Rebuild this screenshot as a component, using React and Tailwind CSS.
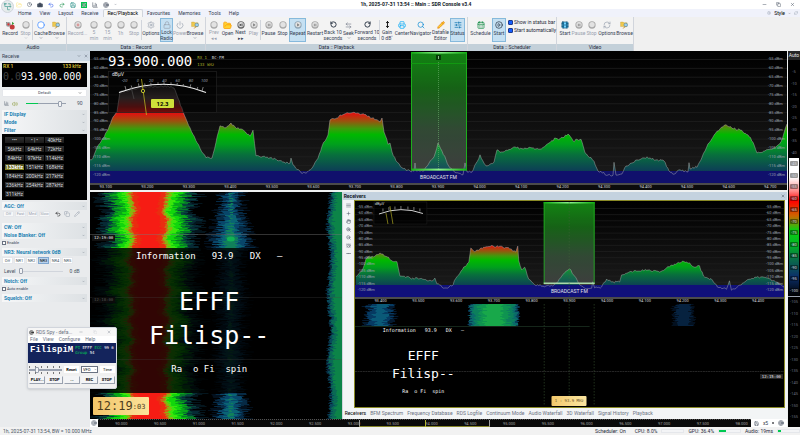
import { useState } from 'react';
import clsx from 'clsx';
import {
  AlarmClock, AlignJustify, ArrowLeftRight, BarChart3, CalendarDays, Camera, ChevronDown, Circle, CirclePlay, Clock,
  Copy, Film, FolderOpen, Hand, Lock, Minus, MoreHorizontal, MoveVertical, Pencil, Plus, Power, Printer, Redo2,
  RefreshCw, RotateCcw, RotateCw, Save, Search, Settings, SlidersHorizontal, Target, Undo2, Volume2, X, ZoomIn,
  ZoomOut,
} from 'lucide-react';

// repeatable noise, so the traces look the same on every render
const makeNoise = (seed) => {
  let s = seed;
  return () => {
    s = (s * 16807) % 2147483647;
    return s / 2147483647 - 0.5;
  };
};

const traceFrom = (points, seed) => {
  const noise = makeNoise(seed);
  const out = [];
  for (let i = 0; i < points.length - 1; i += 1) {
    const [x0, y0] = points[i];
    const [x1, y1] = points[i + 1];
    const steps = Math.max(1, Math.round((x1 - x0) / 1.4));
    for (let k = 0; k < steps; k += 1) {
      const t = k / steps;
      const amp = k === 0 ? 0.6 : 2;
      out.push(`${(x0 + (x1 - x0) * t).toFixed(1)},${(y0 + (y1 - y0) * t + noise() * amp).toFixed(1)}`);
    }
  }
  out.push(points[points.length - 1].join(','));
  return out.join(' ');
};

// one ragged column of the waterfall, a row per pixel
const raggedPath = (top, bottom, center, half, rough, seed) => {
  const noise = makeNoise(seed);
  let d = '';
  for (let y = top; y < bottom; y += 1) {
    const w = Math.max(0, half(y));
    const l = center - w - noise() * rough;
    const r = center + w + noise() * rough;
    if (r > l) d += `M${l.toFixed(1)} ${y}H${r.toFixed(1)}V${y + 1}H${l.toFixed(1)}Z`;
  }
  return d;
};

const MAIN_POINTS = [
  [90, 160], [93, 158], [96, 150], [103, 138], [108, 130], [113, 117], [117, 112], [119, 98], [120, 92], [135, 89],
  [150, 87], [165, 86], [174, 88], [178, 98], [183, 112], [190, 128], [200, 148], [206, 158], [212, 158], [216, 142],
  [220, 126], [226, 128], [231, 123], [235, 127], [244, 131], [250, 136], [253, 130], [256, 156], [270, 158],
  [284, 162], [290, 163], [291, 158], [293, 165], [301, 173], [306, 173], [312, 168], [318, 158], [322, 146],
  [328, 135], [330, 120], [335, 119], [340, 115], [350, 113], [358, 113], [366, 115], [372, 118], [380, 122],
  [382, 118], [384, 132], [388, 144], [390, 143], [392, 152], [396, 161], [402, 168], [410, 171], [414, 171],
  [415, 163], [416, 171], [424, 171], [430, 161], [434, 157], [438, 143], [442, 151], [446, 160], [450, 168],
  [456, 173], [463, 175], [465, 163], [467, 172], [472, 172], [480, 155], [484, 163], [486, 166], [494, 162],
  [497, 150], [500, 152], [506, 150], [515, 147], [522, 149], [532, 148], [540, 149], [546, 145], [556, 138],
  [560, 139], [568, 134], [573, 141], [581, 139], [585, 153], [594, 161], [598, 171], [608, 175], [613, 175],
  [614, 162], [616, 175], [622, 174], [626, 166], [637, 160], [647, 157], [656, 160], [664, 161], [669, 171],
  [674, 174], [680, 170], [688, 172], [689, 163], [690, 169], [697, 167], [702, 157], [708, 144], [714, 135],
  [720, 129], [726, 125], [732, 128], [740, 130], [748, 135], [753, 142], [757, 153], [765, 151], [775, 148],
  [781, 142], [787, 124],
];

const RX_POINTS = [
  [356, 278], [362, 272], [366, 260], [368, 258], [375, 257], [380, 254], [386, 257], [391, 261], [397, 263],
  [400, 277], [410, 279], [420, 280], [433, 282], [435, 279], [437, 285], [445, 289], [452, 287], [457, 278],
  [464, 268], [469, 263], [471, 249], [475, 253], [480, 250], [485, 248], [493, 247], [503, 248], [510, 250],
  [516, 253], [518, 247], [519, 262], [522, 271], [525, 268], [529, 280], [535, 286], [546, 287], [553, 287],
  [557, 284], [562, 277], [568, 271], [570, 270], [575, 277], [580, 286], [585, 289], [592, 289], [593, 283],
  [595, 289], [602, 288], [607, 280], [612, 283], [620, 283], [622, 276], [630, 273], [640, 272], [650, 271],
  [660, 273], [667, 269], [675, 265], [683, 262], [690, 264], [694, 268], [700, 267], [704, 277], [713, 281],
  [718, 288], [727, 290], [730, 282], [732, 291], [738, 288], [743, 284], [748, 281], [757, 278], [767, 279],
  [775, 282], [785, 288],
];

const MAIN_TRACE = traceFrom(MAIN_POINTS, 4211);
const RX_TRACE = traceFrom(RX_POINTS, 977);

const wobble = (y) =>
  3 * Math.sin(y / 5) + 2.5 * Math.sin(y / 2.3 + 1) - 6 * Math.exp(-((y - 234) ** 2) / 12) - 5 * Math.exp(-((y - 203) ** 2) / 16);

const STRONG_LAYERS = [
  [50, 16, '#04151d'], [45, 15, '#062a35'], [41, 13, '#06453a'], [38, 11, '#067a28'], [34, 10, '#08a818'],
  [30, 8, '#12d60c'], [25, 6, '#3be60c'], [21, 4, '#86b810'], [18, 4, '#c86a14'], [16, 3, '#ea2d10'], [11, 3, '#f61c14'],
].map(([w, rough, fill], i) => ({
  fill,
  d: raggedPath(192, 419, 149, (y) => w + wobble(y) * (w > 24 ? 1 : 0.6), rough, 31 + i * 77),
}));

const weakWidth = (w) => (y) => {
  if (y < 208) return w - 6 - (y % 5);
  if (y < 250) return w - 7 + (y - 208) / 4;
  return w - 5 + 2 * Math.sin(y / 9);
};
const WEAK_LAYERS = [
  [20, 13, '#03101d'], [16, 12, '#062a45'], [12, 10, '#08466a'], [8, 8, '#0a6474'], [4, 6, '#10805a'],
].map(([w, rough, fill], i) => ({ fill, d: raggedPath(192, 419, 231, weakWidth(w), rough, 501 + i * 91) }));

const EDGE_LAYERS = [
  [13, 4, '#062438'], [12, 4, '#08485a'], [10, 4, '#0a6a54'], [7, 4, '#0c8448'],
].map(([w, rough, fill], i) => ({ fill, d: raggedPath(192, 419, 342, (y) => w + 1.5 * Math.sin(y / 11), rough, 83 + i * 53) }));

const RX_BLOBS = [
  ...[[15, 8, '#041a30'], [11, 8, '#063a62'], [6, 7, '#0a5a78']].map(([w, r, fill], i) => ({
    fill, d: raggedPath(305, 327, 380, (y) => w + Math.sin(y / 2), r, 11 + i * 17),
  })),
  ...[[25, 3, '#083c58'], [23, 4, '#0a6a6a'], [20, 4, '#0c7f5c'], [15, 6, '#0f9450'], [9, 6, '#18a84a']].map(([w, r, fill], i) => ({
    fill, d: raggedPath(305, 327, 494, () => w, r, 611 + i * 29),
  })),
  ...[[10, 6, '#03101f'], [7, 5, '#06223f']].map(([w, r, fill], i) => ({
    fill, d: raggedPath(305, 327, 684, () => w, r, 711 + i * 31),
  })),
];

/* ---------- ribbon ---------- */

const Disc = ({ color = '#a8a8a8', kind }) => (
  <svg viewBox="0 0 9 9" className="size-[8px]">
    <circle cx="4.5" cy="4.5" r="4.1" fill={color} />
    <circle cx="4.5" cy="4" r="3" fill="#e2e2e2" />
    {kind === 'rec' && <circle cx="4.5" cy="4.5" r="1.6" fill="#d99a9a" />}
    {kind === 'play' && <path d="M3.6 2.6 6.2 4.4 3.6 6.2Z" fill="#777" />}
    {kind === 'pause' && <path d="M3.2 3h1v3h-1zM5 3h1v3H5z" fill="#888" />}
    {kind === 'next' && <path d="M3 2.8 5 4.4 3 6ZM5.2 2.8h.9v3.2h-.9z" fill="#333" />}
  </svg>
);

const RecordIcon = () => (
  <svg viewBox="0 0 10 9" className="h-[9px] w-[10px]">
    <path d="M1 1.5 5 4" stroke="#555" strokeWidth="1" />
    <circle cx="3.4" cy="3.4" r="2.4" fill="#9a9a9a" />
    <circle cx="3.4" cy="3.4" r="1.1" fill="#d33" />
    <circle cx="7.2" cy="6" r="2.5" fill="#c33a3a" />
    <path d="M7 .8 9.2 2.6 7 4Z" fill="#3a9a3a" />
  </svg>
);

const BrowseIcon = () => (
  <svg viewBox="0 0 10 9" className="h-[8px] w-[9px]">
    <path d="M.6 1.2h3l.7.9h3.6v4.2H.6Z" fill="#efc94f" stroke="#c29a2c" strokeWidth=".4" />
    <circle cx="6.4" cy="4.4" r="2" fill="#9fd0ee" stroke="#3f7fb0" strokeWidth=".6" />
    <path d="M6 5.8 3.6 8.4" stroke="#c08a20" strokeWidth="1.1" />
  </svg>
);

const line = 'size-[7px] text-gray-800';
const faint = 'size-[8px] text-gray-400';

const RIBBON = [
  {
    title: 'Audio', width: 'w-[67px]',
    items: [
      { label: 'Record', width: 'w-[18px]', icon: <RecordIcon /> },
      { label: 'Stop', width: 'w-[13px]', icon: <Disc />, off: true, menu: true },
      { sep: true },
      { label: 'Cache', width: 'w-[16px]', icon: <Clock className="size-[8px] fill-white text-blue-500" />, menu: true },
      { label: 'Browse', width: 'w-[15px]', icon: <BrowseIcon />, menu: true },
    ],
  },
  {
    title: 'Data :: Record', width: 'w-[139px]',
    items: [
      { label: 'Record...', width: 'w-[19px]', icon: <Disc kind="rec" />, off: true },
      { label: '5', sub: 'min', width: 'w-[14px]', icon: <Disc />, off: true },
      { label: '15', sub: 'min', width: 'w-[13px]', icon: <Disc />, off: true },
      { label: '1h', width: 'w-[13px]', icon: <Disc />, off: true },
      { label: 'Stop', width: 'w-[14px]', icon: <Disc />, off: true },
      { sep: true },
      { label: 'Options', width: 'w-[18px]', icon: <Settings className={faint} /> },
      { label: 'Lock', sub: 'Radio', width: 'w-[13px]', icon: <Lock className={faint} />, active: true },
      { label: 'Power', width: 'w-[14px]', icon: <Power className={faint} />, off: true },
      { label: 'Browse', width: 'w-[16px]', icon: <BrowseIcon />, menu: true },
    ],
  },
  {
    title: 'Data :: Playback', width: 'w-[262px]',
    items: [
      { label: 'Prev', sub: '◂◂', width: 'w-[14px]', icon: <Disc />, off: true },
      { label: 'Open', width: 'w-[13px]', icon: <FolderOpen className="size-[9px] fill-amber-300 text-amber-500" /> },
      { label: 'Next', sub: '▸▸', width: 'w-[13px]', icon: <Disc kind="next" color="#666" /> },
      { label: 'Play', width: 'w-[13px]', icon: <Disc kind="play" />, off: true },
      { sep: true },
      { label: 'Pause', width: 'w-[15px]', icon: <Disc kind="pause" /> },
      { label: 'Stop', width: 'w-[13px]', icon: <Disc /> },
      { label: 'Repeat', width: 'w-[17px]', icon: <Disc kind="play" color="#8fa5b5" />, active: true },
      { label: 'Restart', width: 'w-[18px]', icon: <Disc kind="pause" /> },
      { label: 'Back 10', sub: 'seconds', width: 'w-[18px]', icon: <RotateCcw className={line} strokeWidth={3} /> },
      { label: 'Seek', width: 'w-[13px]', icon: <ArrowLeftRight className="size-[7px] text-gray-500" />, menu: true },
      { label: 'Forward 10', sub: 'seconds', width: 'w-[24px]', icon: <RotateCw className={line} strokeWidth={3} /> },
      { sep: true },
      { label: 'Gain', sub: '0 dB˅', width: 'w-[14px]', icon: <MoveVertical className="size-[7px] text-black" strokeWidth={3} /> },
      { label: 'Center', width: 'w-[16px]', icon: <Printer className="size-[8px] text-sky-500" /> },
      { label: 'Navigator', width: 'w-[21px]', icon: <Search className="size-[8px] text-sky-600" /> },
      { label: 'Datafile', sub: 'Editor', width: 'w-[19px]', icon: <Pencil className="size-[8px] fill-amber-300 text-amber-600" /> },
      { label: 'Status', width: 'w-[15px]', icon: <SlidersHorizontal className="size-[8px] text-sky-700" />, active: true },
    ],
  },
  {
    title: 'Data :: Scheduler', width: 'w-[89px]',
    items: [
      { label: 'Schedule', width: 'w-[23px]', icon: <CalendarDays className="size-[8px] text-green-700" /> },
      { label: 'Start', width: 'w-[14px]', icon: <CirclePlay className="size-[8px] text-gray-800" />, active: true },
      { checks: true },
    ],
  },
  {
    title: 'Video', width: 'w-[77px]',
    items: [
      { label: 'Start', width: 'w-[14px]', icon: <Film className="size-[8px] fill-sky-300 text-sky-900" /> },
      { label: 'Pause', width: 'w-[13px]', icon: <Disc kind="pause" />, off: true },
      { label: 'Stop', width: 'w-[13px]', icon: <Disc />, off: true },
      { label: 'Options', width: 'w-[18px]', icon: <RefreshCw className={faint} /> },
      { label: 'Browse', width: 'w-[17px]', icon: <BrowseIcon /> },
    ],
  },
];

const RibbonButton = ({ item }) => (
  <button
    type="button"
    className={clsx(
      'flex h-[24px] shrink-0 flex-col items-center border pt-px leading-[6px] whitespace-nowrap',
      item.width,
      item.active ? 'border-[#86b9dc] bg-[#c5e0f2]' : 'border-transparent',
      item.off ? 'text-gray-400' : 'text-gray-700',
    )}
  >
    <span className="flex h-[10px] items-center">{item.icon}</span>
    <span>{item.label}</span>
    {item.sub && <span>{item.sub}</span>}
    {item.menu && <ChevronDown className="size-[4px]" />}
  </button>
);

const StatusChecks = () => (
  <div className="ml-[2px] flex flex-col gap-[3px] pt-[2px] text-gray-800">
    <label className="flex items-center gap-px whitespace-nowrap">
      <input type="checkbox" defaultChecked className="size-[5px] appearance-none rounded-[1px] border border-blue-900 bg-blue-600" />
      Show in status bar
    </label>
    <label className="flex items-center gap-px whitespace-nowrap">
      <input type="checkbox" defaultChecked className="size-[5px] appearance-none rounded-[1px] border border-blue-900 bg-blue-600" />
      Start automatically
    </label>
  </div>
);

const Ribbon = () => (
  <div className="flex h-[34px] shrink-0 bg-[#f0f0f0]">
    {RIBBON.map((group) => (
      <section key={group.title} className={clsx('flex shrink-0 flex-col border-r border-gray-300 bg-[#f3f3f3]', group.width)}>
        <div className="flex flex-1 items-start pt-px pl-px">
          {group.items.map((item, i) => {
            if (item.sep) return <span key={i} className="mt-[2px] h-[20px] w-px shrink-0 bg-gray-300" />;
            if (item.checks) return <StatusChecks key={i} />;
            return <RibbonButton key={i} item={item} />;
          })}
        </div>
        <h2 className="h-[7px] bg-[#c3d0d9] text-center leading-[7px] text-gray-800">{group.title}</h2>
      </section>
    ))}
  </div>
);

const TABS = ['Home', 'View', 'Layout', 'Receive', 'Rec/Playback', 'Favourites', 'Memories', 'Tools', 'Help'];

const TitleBar = () => (
  <header className="relative shrink-0">
    <div className="grid h-[9px] grid-cols-[1fr_auto_1fr] items-center bg-white">
      <div className="flex items-center gap-[5px] pl-[16px] text-gray-700">
        <FolderOpen className="size-[6px] text-amber-200" />
        <Clock className="size-[5px]" />
        <Camera className="size-[6px] fill-gray-600" />
        <Undo2 className="size-[6px] text-blue-700" />
        <Redo2 className="size-[6px] text-green-700" />
        <Save className="size-[6px] text-teal-700" />
        <span className="border border-green-500 bg-green-100"><Film className="size-[4px] text-green-800" /></span>
        <BarChart3 className="size-[6px]" />
        <Target className="size-[6px]" />
        <ChevronDown className="size-[3px]" />
      </div>
      <h1 className="pl-[32px] font-bold text-gray-900">1h, 2025-07-31 13:54 :: Main :: SDR Console v3.4</h1>
      <div className="flex justify-end gap-[9px] pr-[5px] text-gray-700">
        <button type="button" aria-label="Minimize"><Minus className="size-[5px]" /></button>
        <button type="button" aria-label="Restore"><Copy className="size-[5px]" /></button>
        <button type="button" aria-label="Close"><X className="size-[5px]" /></button>
      </div>
    </div>
    <nav className="flex h-[8px] items-center bg-[#f0f2fb] pl-[14px] text-gray-700">
      {TABS.map((tab) => (
        <button
          key={tab}
          type="button"
          className={clsx('h-full px-[4px]', tab === 'Rec/Playback' && 'rounded-t-[2px] border border-b-0 border-gray-300 bg-[#f7f7f7] text-black')}
        >
          {tab}
        </button>
      ))}
      <div className="ml-auto flex items-center gap-[3px] pr-[2px]">
        <Settings className="size-[4px] text-gray-400" />
        <span className="text-black">Style</span>
        <ChevronDown className="size-[3px]" />
        <RefreshCw className="size-[4px] text-gray-400" />
      </div>
    </nav>
    <div className="absolute top-0 left-[1px] flex size-[13px] items-center justify-center rounded-full border border-gray-300 bg-[#e6ecec]">
      <svg viewBox="0 0 10 10" className="size-[9px]" fill="none" stroke="#5fa8a0" strokeWidth=".9">
        <path d="M2 2h2.4M5.5 2H8M2 2v3h3v3.6M5 5h3M8 2v1.6M5 8.6h2.6" />
        <circle cx="2" cy="2" r=".7" fill="#5fa8a0" />
        <circle cx="8" cy="5" r=".7" fill="#5fa8a0" />
      </svg>
    </div>
  </header>
);

/* ---------- left column ---------- */

const Section = ({ title }) => (
  <h3 className="flex h-[8px] items-center justify-between bg-gradient-to-r from-[#f6f7f8] to-[#dde1e4] pr-[2px] pl-[2px] font-bold text-[#1f83b4]">
    {title}
    <ChevronDown className="size-[3px] text-gray-600" />
  </h3>
);

const FILTERS = [
  '•••', '• | •', '40kHz', '56kHz', '64kHz', '72kHz', '84kHz', '97kHz', '114kHz', '133kHz', '151kHz', '168kHz',
  '184kHz', '200kHz', '217kHz', '236kHz', '254kHz', '287kHz', '311kHz',
];

const thumb =
  '[&::-webkit-slider-thumb]:h-[6px] [&::-webkit-slider-thumb]:w-[4px] [&::-webkit-slider-thumb]:appearance-none [&::-webkit-slider-thumb]:rounded-[1px] [&::-webkit-slider-thumb]:border [&::-webkit-slider-thumb]:border-gray-400 [&::-webkit-slider-thumb]:bg-gray-100';

const ReceivePanel = () => {
  const [filter, setFilter] = useState('133kHz');
  const [nr, setNr] = useState('NR3');

  return (
    <aside className="flex w-[90px] shrink-0 flex-col bg-[#e9ebed]">
      <div className="flex h-[10px] items-center gap-[3px] bg-[#ccd7e2] pr-[2px] pl-[2px] text-gray-700">
        <span>Receive</span>
        <ChevronDown className="ml-auto size-[4px]" />
        <X className="size-[4px]" />
      </div>
      <div className="mt-[2px] mr-[3px] ml-[2px] h-[24px] bg-black px-px">
        <div className="flex h-[7px] items-center justify-between pr-[5px] font-bold text-[#c9b32f]">
          <span>RX 1</span>
          <span>133 kHz</span>
        </div>
        <p className="font-['DejaVu_Sans_Mono',monospace] text-[10px] leading-[14px] text-white">
          <span className="text-neutral-700">0.0</span>93.900.000
        </p>
      </div>

      <div className="flex flex-col pr-[3px] pl-[2px]">
        <div className="relative mt-[2px] h-[8px] rounded-[1px] border border-gray-200 bg-white">
          <select aria-label="Profile" className="block h-full w-full appearance-none bg-transparent text-center text-[4px] leading-[6px] text-gray-700">
            <option>Default</option>
          </select>
          <ChevronDown className="pointer-events-none absolute top-px right-[4px] size-[4px]" />
        </div>
        <div className="flex h-[13px] items-center gap-[3px] pl-[2px] text-gray-600">
          <BarChart3 className="size-[5px]" />
          <Volume2 className="size-[6px] text-[#8a9a3a]" />
          <input
            type="range"
            aria-label="Volume"
            defaultValue="90"
            className={clsx('ml-[5px] h-px w-[40px] appearance-none bg-gradient-to-r from-green-500 from-30% to-gray-400 to-30%', thumb)}
          />
          <span className="ml-[8px]">90</span>
        </div>
        <Section title="IF Display" />
        <Section title="Mode" />
        <Section title="Filter" />
      </div>

      <div className="mr-[3px] ml-[2px] grid h-[66px] grid-cols-[repeat(3,19px)] content-start gap-px bg-black pt-[2px] pl-[3px]">
        {FILTERS.map((f) => (
          <button
            key={f}
            type="button"
            onClick={() => setFilter(f)}
            className={clsx(
              'h-[8px] border-y border-black bg-gradient-to-b leading-[6px]',
              f === filter ? 'from-[#4a4a20] to-[#8a8a1c] font-bold text-white' : 'from-[#303030] to-[#1a1a1a] text-gray-300',
            )}
          >
            {f}
          </button>
        ))}
      </div>

      <div className="flex flex-col pr-[3px] pl-[2px]">
        <div className="h-[2px]" />
        <Section title="AGC: Off" />
        <div className="flex h-[8px] items-center gap-px pl-px text-[4px] text-gray-400">
          {['Off', 'Fast', 'Med', 'Slow'].map((m) => (
            <button key={m} type="button" className="h-[6px] w-[11px] border border-gray-200 bg-white/60 leading-[4px]">{m}</button>
          ))}
          <Undo2 className="ml-[4px] size-[6px] text-black" />
          <Copy className="ml-[2px] size-[6px]" />
          <Pencil className="ml-[3px] size-[6px]" />
        </div>
        <div className="h-[5px]" />
        <Section title="CW: Off" />
        <Section title="Noise Blanker: Off" />
        <label className="flex h-[7px] items-center gap-px text-[4px] text-gray-700">
          <input type="checkbox" className="size-[4px] appearance-none border border-gray-500 bg-white" />
          Enable
        </label>
        <div className="h-[2px]" />
        <Section title="NR3: Neural network 0dB" />
        <div className="flex h-[9px] items-center gap-px text-[4px] text-gray-600">
          {['Off', 'NR1', 'NR2', 'NR3', 'NR4', 'NR5'].map((m) => (
            <button
              key={m}
              type="button"
              onClick={() => setNr(m)}
              className={clsx('h-[7px] w-[11px] border leading-[5px]', m === nr ? 'border-[#7ea6d0] bg-[#b9d3ee] text-black' : 'border-gray-200 bg-white')}
            >
              {m}
            </button>
          ))}
        </div>
        <label className="flex h-[12px] items-center gap-[3px] pl-[2px] text-gray-600">
          Level
          <input type="range" defaultValue="0" className={clsx('h-px w-[44px] appearance-none bg-gray-300', thumb)} />
          <span className="ml-[4px]">0 dB</span>
        </label>
        <Section title="Notch: Off" />
        <label className="flex h-[7px] items-center gap-px text-[4px] text-gray-700">
          <input type="checkbox" className="size-[4px] appearance-none border border-gray-500 bg-white" />
          Auto enable
        </label>
        <div className="h-[2px]" />
        <Section title="Squelch: Off" />
      </div>
    </aside>
  );
};

/* ---------- spectra ---------- */

const LEVELS = Array.from({ length: 14 }, (_, i) => `${-55 - i * 5} dBm`);
const mhz = (start, step, count) => Array.from({ length: count }, (_, i) => (start + i * step).toFixed(3));

const HeatStops = () => (
  <>
    <stop offset="0" stopColor="#181818" />
    <stop offset=".15" stopColor="#463a3a" />
    <stop offset=".25" stopColor="#8a1c1c" />
    <stop offset=".33" stopColor="#df1410" />
    <stop offset=".42" stopColor="#96560e" />
    <stop offset=".5" stopColor="#3f9a0c" />
    <stop offset=".57" stopColor="#00b800" />
    <stop offset=".68" stopColor="#00a01c" />
    <stop offset=".8" stopColor="#08703c" />
    <stop offset="1" stopColor="#0d3a58" />
  </>
);

const BandStops = () => (
  <>
    <stop offset="0" stopColor="#067d06" />
    <stop offset=".3" stopColor="#0a5a0a" />
    <stop offset=".65" stopColor="#26402a" />
    <stop offset="1" stopColor="#343434" />
  </>
);

const LevelColumn = ({ className }) => (
  <div className={clsx('absolute flex flex-col justify-between text-[4px] text-gray-400', className)}>
    {LEVELS.map((l) => <span key={l}>{l}</span>)}
  </div>
);

const AxisLabels = ({ labels, className }) => (
  <div className={clsx('flex text-[4px]', className)}>
    {labels.map((l) => <span key={l} className="flex-1 text-center">{l}</span>)}
  </div>
);

const METER_TICKS = ['-20', '0', '20', '40', '60', '80', '100'];

const MainSpectrum = () => (
  <section className="relative h-[139px] shrink-0 overflow-hidden bg-black">
    <svg viewBox="90 51 697 139" preserveAspectRatio="none" className="absolute inset-0 size-full">
      <defs>
        <linearGradient id="heat" gradientUnits="userSpaceOnUse" x1="0" x2="0" y1="85" y2="172"><HeatStops /></linearGradient>
        <linearGradient id="band" x1="0" x2="0" y1="0" y2="1"><BandStops /></linearGradient>
        <linearGradient id="back" x1="0" x2="0" y1="0" y2="1">
          <stop offset="0" stopColor="#000" />
          <stop offset="1" stopColor="#191919" />
        </linearGradient>
        <linearGradient id="bandTop" x1="0" x2="1" y1="0" y2="0">
          <stop offset="0" stopColor="#13b013" />
          <stop offset=".5" stopColor="#8df08d" />
          <stop offset="1" stopColor="#13b013" />
        </linearGradient>
      </defs>
      <rect x="90" y="51" width="697" height="120" fill="url(#back)" />
      {LEVELS.map((l, i) => (
        <path key={l} d={`M90 ${59.5 + i * 8.85}H787`} stroke="#232323" strokeWidth=".7" />
      ))}
      <rect x="411" y="52" width="55.5" height="119" fill="url(#band)" />
      <polygon points={`90,171 ${MAIN_TRACE} 787,171`} fill="url(#heat)" />
      <rect x="411" y="52" width="55.5" height="119" fill="#fff" opacity=".05" />
      <rect x="90" y="171" width="697" height="12" fill="#10106c" />
      <polyline points={MAIN_TRACE} fill="none" stroke="#b5b5b5" strokeWidth=".6" opacity=".75" />
      <path d="M411.5 52V170M466.5 52V170" stroke="#1cae1c" strokeWidth="1" />
      <path d="M411 63.5H466" stroke="#12a012" strokeWidth=".8" />
      <path d="M438.5 62V170" stroke="#6fae6f" strokeWidth=".6" strokeDasharray="1 1" />
      <rect x="411" y="52" width="56" height="1.6" fill="url(#bandTop)" />
      <rect x="411" y="168.6" width="56" height="2" fill="url(#bandTop)" />
      <rect x="436" y="55" width="5" height="5" fill="#063c06" />
      <path d="M438.5 56v3" stroke="#a6d8a6" strokeWidth=".8" />
      <rect x="90" y="183" width="697" height="2" fill="#4b4b4b" />
      <rect x="90" y="185" width="697" height="5" fill="#0c0c0c" />

      <rect x="108.5" y="71.5" width="108" height="41" fill="#000" fillOpacity=".45" stroke="#222" strokeWidth=".7" />
      <path d="M119 92.5Q164 76 206 92.5" fill="none" stroke="#f0f0f0" strokeWidth="1.1" />
      <path
        d="M126 90 125 86M132 88l-.8-2.5M139 86.5l-.5-3M145 85.5l-.3-2M151 84.8l-.2-2M158 84.3v-2M164 84.2v-2M171 84.3v-2M177 85l.3-2M183 86l.4-2M190 87.3l.8-3M197 89.5l.8-2.5M202 91l1.2-4"
        stroke="#cfcfcf"
        strokeWidth=".6"
      />
      <path d="M141.5 79 146.5 115" stroke="#b8b020" strokeWidth=".8" />
      <path d="M131 87 134 99" stroke="#555" strokeWidth=".6" />
      <circle cx="143" cy="91" r="1.7" fill="#222" stroke="#e0e030" strokeWidth=".8" />
    </svg>

    <LevelColumn className="top-[6px] bottom-[13px] left-[3px]" />
    <LevelColumn className="top-[6px] right-[2px] bottom-[13px]" />

    <div className="absolute top-[3px] left-[18px] flex gap-[5px]">
      <p className="font-['DejaVu_Sans_Mono',monospace] text-[14px] leading-[14px] text-white">93.900.000</p>
      <div className="font-['DejaVu_Sans_Mono',monospace] text-[4px] leading-[7px] text-[#b5b52c]">
        <p className="whitespace-pre">RX 1  <span className="text-gray-300">BC-FM</span></p>
        <p>133 kHz</p>
      </div>
    </div>
    <span className="absolute top-[21px] left-[22px] text-[5px] text-gray-200">dBµV</span>
    <div className="absolute top-[28px] left-[28px] flex w-[93px] text-[4px] text-gray-400 italic">
      {METER_TICKS.map((t) => <span key={t} className="flex-1 text-center">{t}</span>)}
    </div>
    <span className="absolute top-[48px] left-[61px] h-[9px] w-[23px] rounded-[1px] bg-[#cfe03a] text-center text-[6px] leading-[9px] font-bold text-black">
      12.3
    </span>
    <span className="absolute top-[124px] left-1/2 -translate-x-1/2 text-[5px] text-gray-200">BROADCAST FM</span>
    <div className="absolute inset-x-0 bottom-0 h-[5px]">
      <AxisLabels labels={mhz(93.1, 0.1, 17)} className="-mr-[4px] -ml-[5px] text-gray-300" />
    </div>
  </section>
);

const Layers = ({ list }) => list.map((l, i) => <path key={i} d={l.d} fill={l.fill} />);

const RdsText = ({ small }) => (
  <div
    className={clsx(
      "absolute flex flex-col items-center font-['DejaVu_Sans_Mono',monospace] whitespace-pre text-white",
      small ? 'top-[125px] left-[28px] text-[5px] leading-[8px]' : 'top-[56px] left-[46px] text-[9px] leading-[16px]',
    )}
  >
    <p>Information   93.9   DX   –</p>
    <p className={small ? 'mt-[13px] text-[13px] leading-[18px]' : 'mt-[21px] text-[25px] leading-[34px]'}>EFFF</p>
    <p className={small ? 'text-[13px] leading-[18px]' : 'text-[25px] leading-[34px]'}>Filisp--</p>
    <p className={small ? 'mt-[4px]' : 'mt-[8px]'}>Ra  o Fi  spin</p>
  </div>
);

const Waterfall = () => (
  <section className="relative min-w-0 flex-[252] overflow-hidden bg-black">
    <svg viewBox="90 192 252 227" preserveAspectRatio="none" className="absolute inset-0 size-full">
      <Layers list={STRONG_LAYERS} />
      <Layers list={WEAK_LAYERS} />
      <ellipse cx="231" cy="239" rx="4" ry="2.5" fill="#12c850" opacity=".7" />
      <rect x="90" y="248" width="238" height="145" fill="#000" opacity=".8" />
      <Layers list={EDGE_LAYERS} />
      <path d="M90 234.5H342" stroke="#7b7b7b" strokeWidth=".6" opacity=".7" />
      <path d="M90 297.5H342M90 359.5H342" stroke="#444" strokeWidth=".5" opacity=".6" />
    </svg>
    <span className="absolute top-[43px] left-[2px] bg-[#111] px-[2px] font-['DejaVu_Sans_Mono',monospace] text-[4px] leading-[6px] text-gray-200">12:19:00</span>
    <span className="absolute top-[105px] left-[2px] bg-[#0b0b0b] px-[2px] font-['DejaVu_Sans_Mono',monospace] text-[4px] leading-[6px] text-neutral-600">12:18:00</span>
    <RdsText />
    <div className="absolute bottom-[4px] left-[3px] flex h-[18px] w-[56px] items-center justify-center rounded-[1px] bg-gradient-to-r from-[#f2c468] to-[#fbe49a] font-['DejaVu_Sans_Mono',monospace] text-[12px] leading-none text-[#4d3c1c]">
      12:19<span className="pt-[3px] text-[7px]">:03</span>
    </div>
  </section>
);

const RX_TABS = [
  'Receivers', 'BFM Spectrum', 'Frequency Database', 'RDS Logfile', 'Continuum Mode', 'Audio Waterfall',
  '3D Waterfall', 'Signal History', 'Playback',
];

const RX_TOOLS = [
  ['List', AlignJustify], ['Add', Plus], ['Pan', Hand], ['Zoom in', ZoomIn], ['Zoom out', ZoomOut], ['Tune', AlarmClock],
  ['More', MoreHorizontal],
];

const Receivers = () => (
  <section className="flex min-w-0 flex-[445] flex-col border-l border-gray-300 bg-[#f3f5f6]">
    <div className="flex h-[8px] items-center justify-between bg-[#c4d2df] pr-[2px] pl-px text-gray-900">
      <h2 className="font-bold">Receivers</h2>
      <button type="button" aria-label="Close receivers"><X className="size-[4px]" /></button>
    </div>
    <div className="flex min-h-0 flex-1">
      <div className="flex w-[11px] flex-col items-center gap-[3px] pt-[3px] text-gray-700">
        {RX_TOOLS.map(([name, Icon]) => (
          <button key={name} type="button" aria-label={name}><Icon className="size-[5px]" strokeWidth={2} /></button>
        ))}
      </div>
      <div className="relative mr-[2px] min-w-0 flex-1 overflow-hidden border border-[#8a8a26] bg-black">
        <svg viewBox="355 202 430 206" preserveAspectRatio="none" className="absolute inset-0 size-full">
          <defs>
            <linearGradient id="rxHeat" gradientUnits="userSpaceOnUse" x1="0" x2="0" y1="226" y2="288"><HeatStops /></linearGradient>
            <linearGradient id="rxBack" x1="0" x2="0" y1="0" y2="1">
              <stop offset="0" stopColor="#000" />
              <stop offset="1" stopColor="#1a1a1a" />
            </linearGradient>
          </defs>
          <rect x="355" y="202" width="430" height="84" fill="url(#rxBack)" />
          {LEVELS.map((l, i) => (
            <path key={l} d={`M355 ${209.5 + i * 6.15}H785`} stroke="#242424" strokeWidth=".6" />
          ))}
          <rect x="544" y="203" width="51" height="83" fill="url(#band)" />
          <polygon points={`356,286 ${RX_TRACE} 785,286`} fill="url(#rxHeat)" />
          <rect x="544" y="203" width="51" height="83" fill="#fff" opacity=".05" />
          <rect x="355" y="286" width="430" height="12" fill="#10107a" />
          <polyline points={RX_TRACE} fill="none" stroke="#b0b0b0" strokeWidth=".6" opacity=".75" />
          <path d="M544.5 203V285M594.5 203V285" stroke="#20b020" strokeWidth=".8" />
          <rect x="544" y="203" width="51" height="1.5" fill="url(#bandTop)" />
          <rect x="544" y="283.5" width="51" height="1.5" fill="#a8d8a8" />
          <rect x="355" y="298" width="430" height="2" fill="#4b4b4b" />
          <Layers list={RX_BLOBS} />
          <path d="M544.5 305V407M569.5 203V407M594.5 305V407" stroke="#44663c" strokeWidth=".6" strokeDasharray="1.5 1.5" opacity=".8" />
          <path d="M355 327.5H590" stroke="#24402c" strokeWidth=".6" />
          <path d="M355 372.5H785" stroke="#5a5a5a" strokeWidth=".6" strokeDasharray="2 .6" opacity=".7" />
          <rect x="374" y="203" width="53" height="22" fill="#000" fillOpacity=".6" stroke="#1c1c1c" strokeWidth=".6" />
          <path d="M379 215Q401 206.5 423 214.5" fill="none" stroke="#e8e8e8" strokeWidth=".9" />
          <path d="M383 212.5v-3M389 211v-3M395 210.5v-3M401 210v-3M408 210.5v-3M414 211v-3M420 212.5v-3" stroke="#aaa" strokeWidth=".7" />
          <path d="M390 207 393 225M386 214 388 225" stroke="#a8a020" strokeWidth=".7" />
        </svg>
        <LevelColumn className="top-[4px] left-[3px] h-[87px]" />
        <LevelColumn className="top-[4px] right-px h-[87px]" />
        <span className="absolute top-px left-[20px] text-[4px] text-gray-300">dBµV</span>
        <span className="absolute top-[88px] left-1/2 -translate-x-1/2 text-[5px] text-gray-200">BROADCAST FM</span>
        <div className="absolute inset-x-0 top-[98px]">
          <AxisLabels labels={mhz(93.4, 0.1, 11)} className="px-[7px] text-gray-300" />
        </div>
        <RdsText small />
        <span className="absolute right-px bottom-[28px] bg-neutral-800 px-[2px] font-['DejaVu_Sans_Mono',monospace] text-[4px] leading-[5px] text-gray-200">12:15:00</span>
        <span className="absolute bottom-px left-1/2 h-[10px] w-[35px] -translate-x-1/2 rounded-[1px] bg-gradient-to-r from-[#f3c96c] to-[#fbe6a0] text-center font-['DejaVu_Sans_Mono',monospace] text-[4px] leading-[10px] text-[#6b5326]">
          1 : 93.9 MHz
        </span>
      </div>
    </div>
    <nav className="flex h-[11px] shrink-0 items-center gap-[4px] pl-[2px] whitespace-nowrap text-gray-500">
      {RX_TABS.map((tab, i) => (
        <button key={tab} type="button" className={clsx(i === 0 && 'text-black')}>{tab}</button>
      ))}
    </nav>
  </section>
);

const BandAxis = () => (
  <div className="flex h-[8px] shrink-0 bg-[#0a0a0a]">
    <div className="flex w-[8px] items-center justify-center bg-white"><Target className="size-[6px] text-gray-600" /></div>
    <div className="relative min-w-0 flex-1 border-t border-dotted border-neutral-600 pt-[2px]">
      <div className="absolute inset-y-0 left-[40%] w-1/5 border-x border-b border-neutral-400 border-b-[#85852a]" />
      <div className="absolute inset-y-0 left-1/2 w-px bg-[#b5b52c]" />
      <AxisLabels labels={mhz(90, 0.5, 17)} className="-mr-[10px] ml-[4px] text-neutral-400" />
    </div>
    <div className="relative flex w-[36px] items-center justify-between bg-white px-[3px] text-gray-700">
      <Save className="size-[5px]" />
      <span>x5</span>
      <Circle className="size-[2px] fill-black" />
      <Target className="size-[6px]" />
    </div>
  </div>
);

const ColourScale = () => (
  <aside className="relative ml-px w-[12px] shrink-0 overflow-hidden bg-black">
    <div className="h-[9px] bg-neutral-800 text-center leading-[9px] text-gray-200">Auto</div>
    <div className="mx-px mt-[98px] h-[138px] bg-[linear-gradient(#fff_0%,#fff_14%,#f88_24%,#f00_31%,#c60_42%,#1c1_52%,#0b2_62%,#0a6a4a_74%,#0b2f6a_86%,#000_100%)]" />
    <div className="border-t border-gray-400" />
    <div className="absolute inset-x-[2px] top-[18px] bottom-[8px] flex flex-col justify-between text-center text-[4px] leading-[5px] text-gray-500">
      {Array.from({ length: 31 }, (_, i) => (
        <span key={i} className={clsx(i > 7 && i < 20 && 'rounded-[1px] bg-black/40 text-gray-300')}>{-(i * 5 + 5)}</span>
      ))}
    </div>
  </aside>
);

const RdsSpy = () => (
  <div className="absolute top-[276px] left-[27px] w-[90px] overflow-hidden rounded-[2px] border border-gray-300 bg-[#f0f0f0] text-gray-500 shadow">
    <div className="flex h-[8px] items-center gap-[2px] bg-[#f6f6f6] px-px">
      <Target className="size-[5px] text-black" />
      <span className="text-[5px]">RDS Spy - defa...</span>
      <Minus className="ml-auto size-[4px]" />
      <Copy className="ml-[8px] size-[4px] text-gray-300" />
      <X className="mr-[4px] ml-[8px] size-[4px]" />
    </div>
    <nav className="flex h-[7px] items-center gap-[5px] bg-white pl-[2px] text-[5px]">
      {['File', 'View', 'Configure', 'Help'].map((m) => <button key={m} type="button">{m}</button>)}
    </nav>
    <div className="flex h-[20px] gap-[2px] bg-[#14245c] pt-[2px] pl-[2px]">
      <span className="font-['Liberation_Mono',monospace] text-[9px] leading-[11px] font-bold text-white">FilispiM</span>
      <div className="font-['DejaVu_Sans_Mono',monospace] text-[4px] leading-[5px] whitespace-pre text-green-500">
        <p>PI <span className="text-white">EFFF</span> ECC <span className="text-white">99 6</span></p>
        <p>Group <span className="text-white">54</span></p>
      </div>
    </div>
    <div className="flex h-[13px] items-center gap-[2px] px-px text-[4px] text-black">
      <div className="flex w-[33px] flex-col gap-px">
        <div className="h-[2px] bg-[repeating-linear-gradient(90deg,#777_0_1px,transparent_1px_6px)]" />
        <input type="range" aria-label="Position" defaultValue="20" className={clsx('h-[2px] w-full appearance-none border border-gray-400 bg-white', thumb)} />
        <div className="h-[2px] bg-[repeating-linear-gradient(90deg,#777_0_1px,transparent_1px_6px)]" />
      </div>
      <button type="button" className="h-[7px] flex-1 bg-white font-bold">Reset</button>
      <div className="relative w-[17px]">
        <select aria-label="Source" className="block h-[7px] w-full appearance-none border border-gray-500 bg-white pl-px leading-[5px]"><option>VFO</option></select>
        <ChevronDown className="pointer-events-none absolute top-[2px] right-px size-[3px]" />
      </div>
      <button type="button" className="h-[7px] flex-1 bg-white">Time</button>
    </div>
    <div className="mb-[4px] grid h-[8px] grid-cols-5 gap-px px-px text-black">
      {['PLAY...', 'STOP', '...', 'REC', 'STOP'].map((b, i) => (
        <button key={i} type="button" className="border border-t-gray-100 border-r-gray-400 border-b-gray-400 border-l-gray-100 bg-gray-100 text-[4px] leading-[6px] font-bold">{b}</button>
      ))}
    </div>
  </div>
);

const Load = ({ label, children }) => (
  <div className="flex items-center gap-[4px]">
    <span>{label}</span>
    <span className="flex h-[4px] w-[23px] items-center border border-gray-200 bg-gray-100">{children}</span>
  </div>
);

const StatusBar = () => (
  <footer className="flex h-[8px] shrink-0 items-center bg-[#f2f2f2] pl-[3px] whitespace-nowrap text-gray-600">
    <span>1h, 2025-07-31 13:54, BW = 10.000 MHz</span>
    <div className="ml-auto flex items-center gap-[4px] text-gray-800">
      <span className="mr-[5px]">Scheduler: On</span>
      <Load label="CPU: 8.0%" />
      <Load label="GPU: 36.4%"><span className="h-[2px] w-[7px] bg-green-500" /></Load>
      <Load label="Audio: 19ms"><span className="h-[2px] w-[3px] bg-green-500" /></Load>
    </div>
  </footer>
);

const App = () => (
  <div className="flex h-screen w-full flex-col overflow-hidden bg-[#eef0f0] font-['Roboto','Noto_Sans',sans-serif] text-[5px] leading-none">
    <TitleBar />
    <Ribbon />
    <main className="relative flex min-h-0 flex-1">
      <ReceivePanel />
      <div className="flex min-w-0 flex-1 flex-col">
        <MainSpectrum />
        <div className="mt-[2px] flex min-h-0 flex-1">
          <Waterfall />
          <Receivers />
        </div>
        <BandAxis />
      </div>
      <ColourScale />
      <RdsSpy />
    </main>
    <StatusBar />
  </div>
);

export default App;
